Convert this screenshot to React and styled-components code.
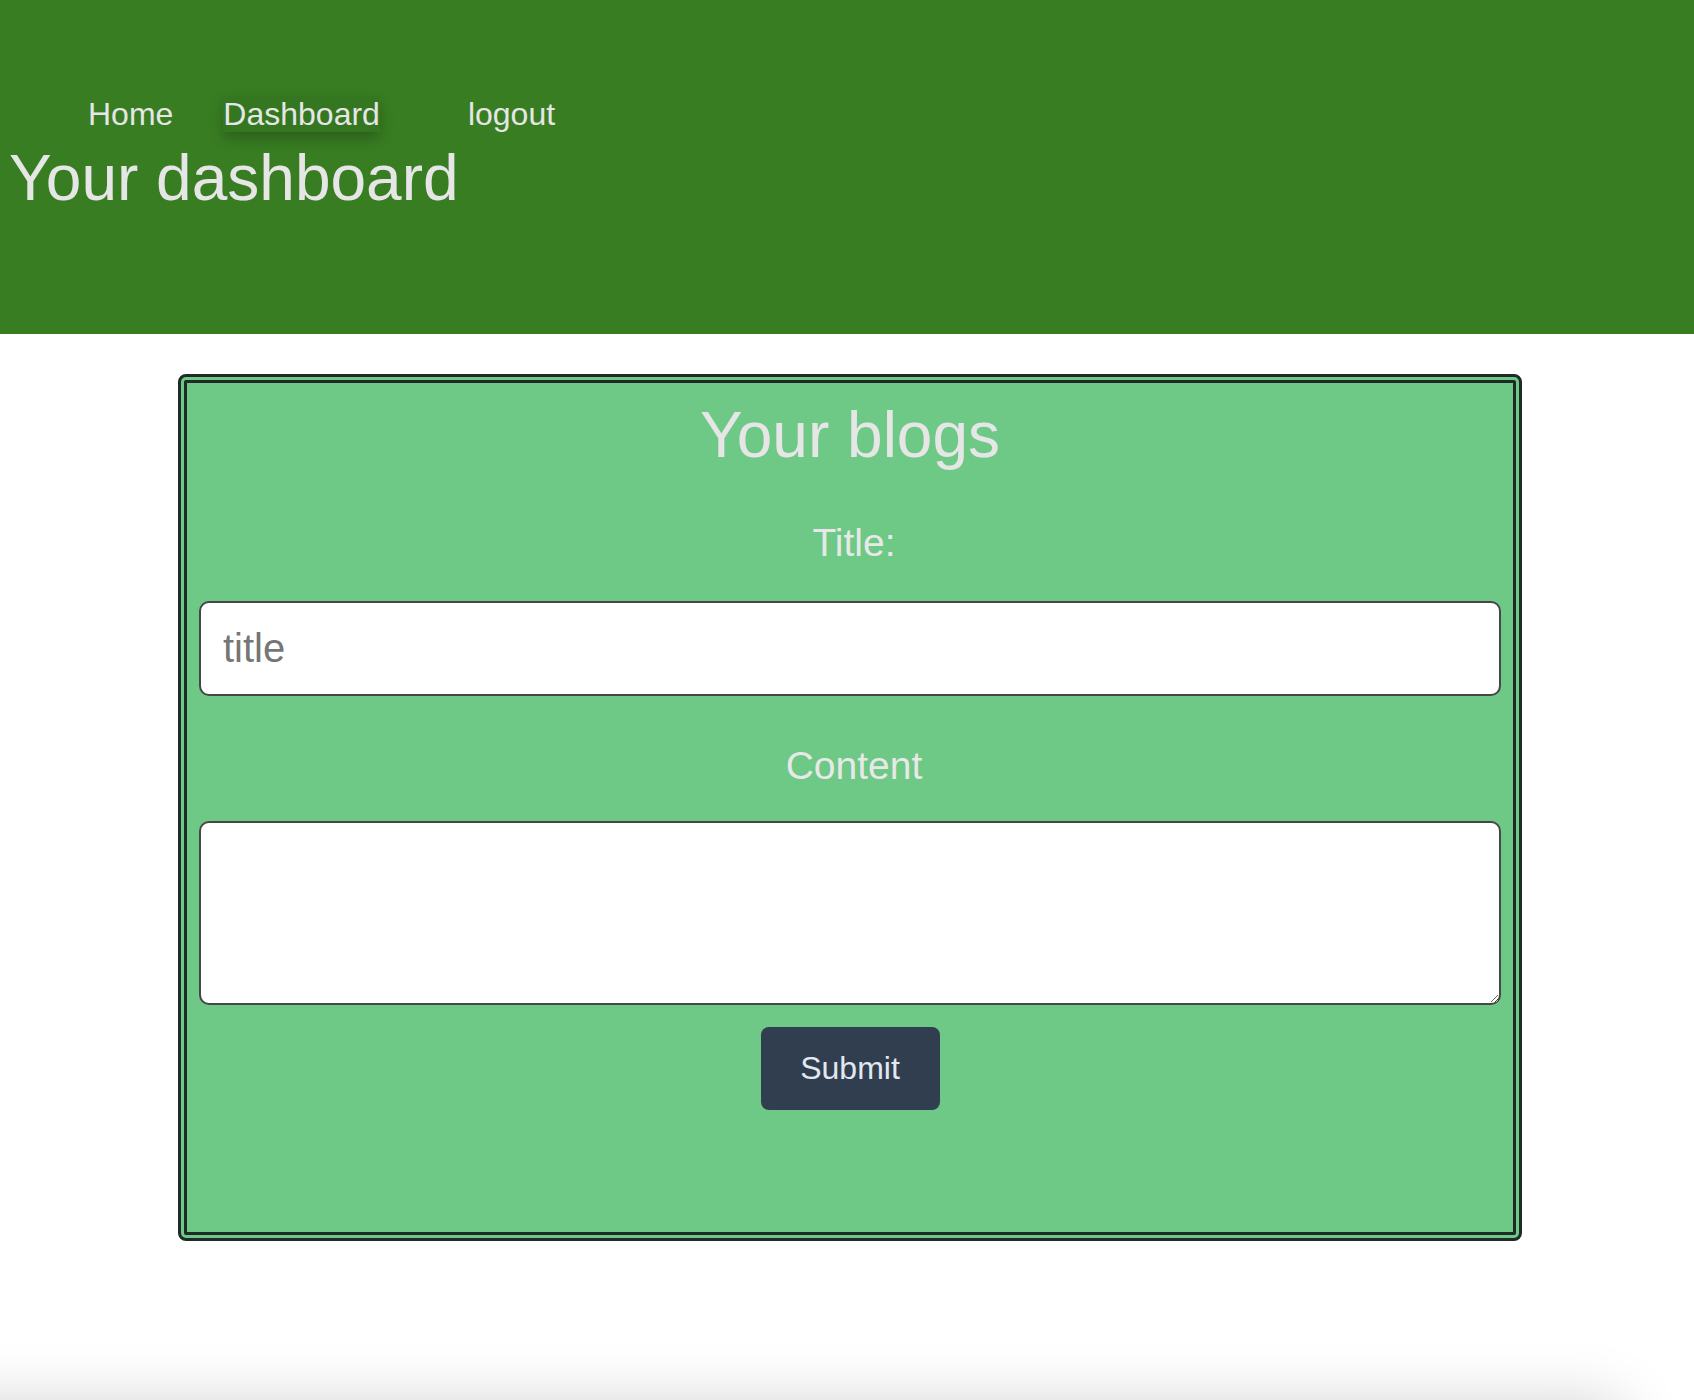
import React from "react";
import styled, { createGlobalStyle } from "styled-components";

const Global = createGlobalStyle`
  html, body { margin: 0; padding: 0; background: #ffffff; }
  body { font-family: "Liberation Sans", Arial, Helvetica, sans-serif; }
  * { box-sizing: border-box; }
`;

const Page = styled.div`
  min-height: 1400px;
  height: 1400px;
  display: flex;
  flex-direction: column;
`;

const Header = styled.header`
  background: #387d22;
  height: 334px;
  padding-top: 96px;
`;

const Nav = styled.nav`
  display: flex;
  align-items: flex-start;
  padding-left: 88px;
`;

const NavLink = styled.a`
  font-size: 32px;
  line-height: 36px;
  color: #e6e6e6;
  text-decoration: none;
  margin-right: ${(p) => p.$after || 0}px;
  background: ${(p) => (p.$active ? "rgba(0,0,0,0.05)" : "transparent")};
  box-shadow: ${(p) => (p.$active ? "0 7px 14px rgba(0,0,0,0.22)" : "none")};
`;

const PageTitle = styled.h1`
  margin: 9px 0 0;
  padding-left: 9px;
  font-size: 64px;
  font-weight: 400;
  line-height: normal;
  color: #e6e6e6;
`;

const Card = styled.section`
  margin: 40px 0 0 178px;
  width: 1344px;
  background: #6dc985;
  border: 9px double #1e2b26;
  border-radius: 8px;
  padding: 15px 12px 122px;
  display: flex;
  flex-direction: column;
  align-items: stretch;
`;

const CardTitle = styled.h2`
  margin: 0;
  font-size: 64px;
  font-weight: 400;
  line-height: normal;
  text-align: center;
  color: #e6e6e6;
`;

const Label = styled.label`
  display: block;
  margin-top: ${(p) => p.$top}px;
  padding-left: 8px;
  font-size: 39px;
  line-height: normal;
  text-align: center;
  color: #e8e8e8;
`;

const TextInput = styled.input`
  display: block;
  width: 100%;
  height: 95px;
  margin-top: 36px;
  border: 2px solid #464646;
  border-radius: 10px;
  background: #ffffff;
  padding: 0 22px;
  font-family: "Liberation Sans", Arial, Helvetica, sans-serif;
  font-size: 40px;
  color: #222;
  outline: none;
  &::placeholder { color: #767676; }
`;

const TextArea = styled.textarea`
  display: block;
  width: 100%;
  height: 184px;
  margin-top: 33px;
  border: 2px solid #464646;
  border-radius: 10px;
  background: #ffffff;
  padding: 12px 22px;
  font-family: "Liberation Sans", Arial, Helvetica, sans-serif;
  font-size: 32px;
  outline: none;
`;

const ButtonRow = styled.div`
  display: flex;
  justify-content: center;
  margin-top: 22px;
`;

const SubmitButton = styled.button`
  width: 179px;
  height: 83px;
  border: none;
  border-radius: 8px;
  background: #303e4f;
  color: #e2e8f0;
  font-family: "Liberation Sans", Arial, Helvetica, sans-serif;
  font-size: 32px;
  cursor: pointer;
`;

const FooterShade = styled.div`
  margin-top: auto;
  height: 60px;
  overflow: hidden;
`;

const FooterEdge = styled.div`
  margin-top: 60px;
  margin-left: -120px;
  width: 1745px;
  height: 200px;
  border-radius: 24px;
  background: #ffffff;
  box-shadow: 0 0 60px rgba(0, 0, 0, 0.17);
`;

export default function App() {
  return (
    <>
      <Global />
      <Page>
        <Header>
          <Nav>
            <NavLink href="#" $after={50}>Home</NavLink>
            <NavLink href="#" $active $after={88}>Dashboard</NavLink>
            <NavLink href="#">logout</NavLink>
          </Nav>
          <PageTitle>Your dashboard</PageTitle>
        </Header>
        <Card>
          <CardTitle>Your blogs</CardTitle>
          <Label $top={49} htmlFor="title">Title:</Label>
          <TextInput id="title" placeholder="title" />
          <Label $top={48} htmlFor="content">Content</Label>
          <TextArea id="content" />
          <ButtonRow>
            <SubmitButton type="button">Submit</SubmitButton>
          </ButtonRow>
        </Card>
        <FooterShade>
          <FooterEdge />
        </FooterShade>
      </Page>
    </>
  );
}
